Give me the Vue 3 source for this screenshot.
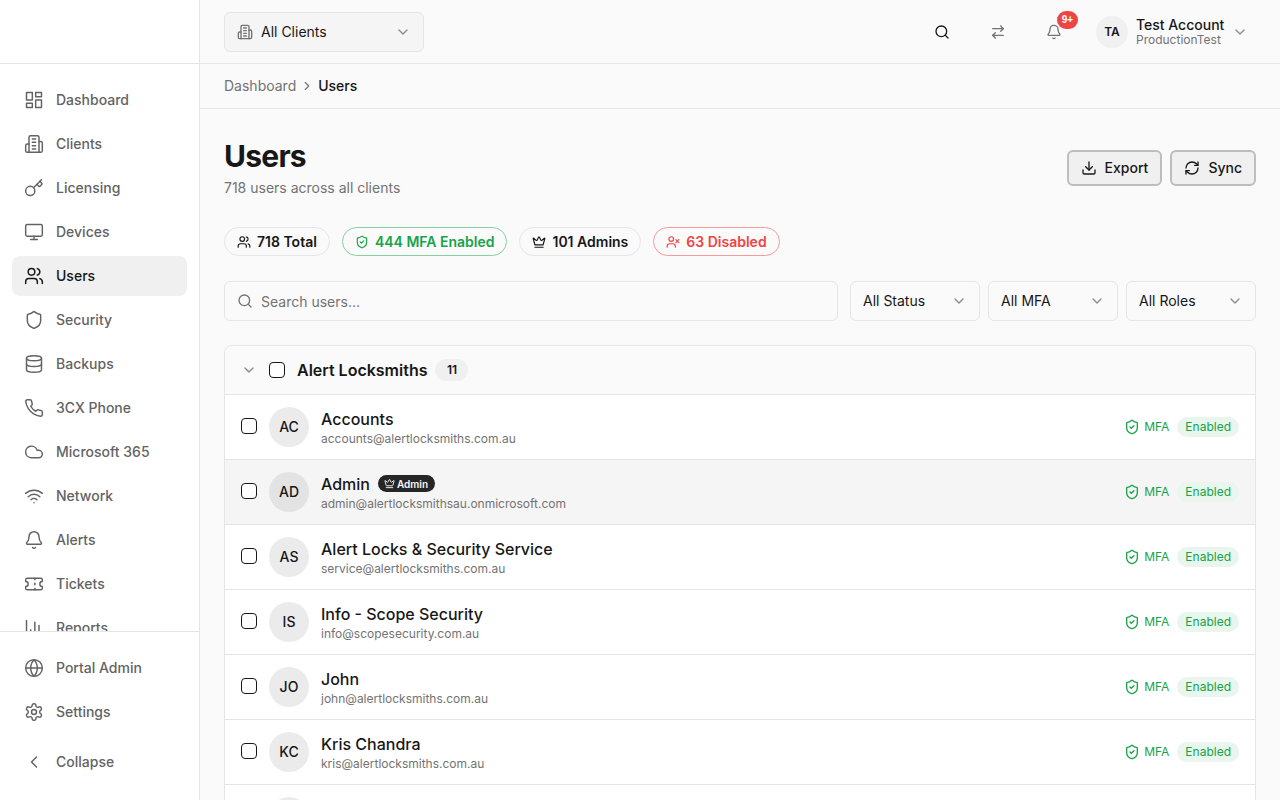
<script setup>
import { ref } from 'vue';

// lucide style icon shapes, kept as lists of path data
const icons = {
  dashboard: ['M3 3h7v9H3z', 'M14 3h7v5h-7z', 'M14 12h7v9h-7z', 'M3 16h7v5H3z'],
  building: ['M6 22V4a2 2 0 0 1 2-2h8a2 2 0 0 1 2 2v18z', 'M6 12H4a2 2 0 0 0-2 2v6a2 2 0 0 0 2 2h2', 'M18 9h2a2 2 0 0 1 2 2v9a2 2 0 0 1-2 2h-2', 'M10 6h4', 'M10 10h4', 'M10 14h4', 'M10 18h4'],
  key: ['M15.5 7.5l2.3 2.3a1 1 0 0 0 1.4 0l2.1-2.1a1 1 0 0 0 0-1.4L19 4', 'M21 2l-9.6 9.6', 'M7.5 21a5.5 5.5 0 1 0 0-11 5.5 5.5 0 0 0 0 11z'],
  monitor: ['M4 3h16a2 2 0 0 1 2 2v10a2 2 0 0 1-2 2H4a2 2 0 0 1-2-2V5a2 2 0 0 1 2-2z', 'M8 21h8', 'M12 17v4'],
  users: ['M16 21v-2a4 4 0 0 0-4-4H6a4 4 0 0 0-4 4v2', 'M9 11a4 4 0 1 0 0-8 4 4 0 0 0 0 8z', 'M22 21v-2a4 4 0 0 0-3-3.87', 'M16 3.13a4 4 0 0 1 0 7.75'],
  shield: ['M20 13c0 5-3.5 7.5-7.66 8.95a1 1 0 0 1-.67-.01C7.5 20.5 4 18 4 13V6a1 1 0 0 1 1-1c2 0 4.5-1.2 6.24-2.72a1.17 1.17 0 0 1 1.52 0C14.51 3.81 17 5 19 5a1 1 0 0 1 1 1z'],
  shieldCheck: ['M20 13c0 5-3.5 7.5-7.66 8.95a1 1 0 0 1-.67-.01C7.5 20.5 4 18 4 13V6a1 1 0 0 1 1-1c2 0 4.5-1.2 6.24-2.72a1.17 1.17 0 0 1 1.52 0C14.51 3.81 17 5 19 5a1 1 0 0 1 1 1z', 'M9 12l2 2 4-4'],
  database: ['M12 8c4.97 0 9-1.34 9-3s-4.03-3-9-3-9 1.34-9 3 4.03 3 9 3z', 'M3 5v14c0 1.66 4 3 9 3s9-1.34 9-3V5', 'M3 12c0 1.66 4 3 9 3s9-1.34 9-3'],
  phone: ['M22 16.92v3a2 2 0 0 1-2.18 2 19.79 19.79 0 0 1-8.63-3.07 19.5 19.5 0 0 1-6-6 19.79 19.79 0 0 1-3.07-8.67A2 2 0 0 1 4.11 2h3a2 2 0 0 1 2 1.72c.13.96.36 1.9.7 2.81a2 2 0 0 1-.45 2.11L8.09 9.91a16 16 0 0 0 6 6l1.27-1.27a2 2 0 0 1 2.11-.45c.91.34 1.85.57 2.81.7A2 2 0 0 1 22 16.92z'],
  cloud: ['M17.5 19H9a7 7 0 1 1 6.71-9h1.79a4.5 4.5 0 1 1 0 9z'],
  wifi: ['M12 20h.01', 'M2 8.82a15 15 0 0 1 20 0', 'M5 12.86a10 10 0 0 1 14 0', 'M8.5 16.43a5 5 0 0 1 7 0'],
  bell: ['M10.27 21a2 2 0 0 0 3.46 0', 'M3.26 15.33A1 1 0 0 0 4 17h16a1 1 0 0 0 .74-1.67C19.41 13.96 18 12.5 18 8A6 6 0 0 0 6 8c0 4.5-1.41 5.96-2.74 7.33'],
  ticket: ['M2 9a3 3 0 0 1 0 6v2a2 2 0 0 0 2 2h16a2 2 0 0 0 2-2v-2a3 3 0 0 1 0-6V7a2 2 0 0 0-2-2H4a2 2 0 0 0-2 2z', 'M13 5v2', 'M13 17v2', 'M13 11v2'],
  chart: ['M3 3v16a2 2 0 0 0 2 2h16', 'M18 17V9', 'M13 17V5', 'M8 17v-3'],
  globe: ['M12 22a10 10 0 1 0 0-20 10 10 0 0 0 0 20z', 'M12 2a14.5 14.5 0 0 0 0 20 14.5 14.5 0 0 0 0-20', 'M2 12h20'],
  gear: ['M12.22 2h-.44a2 2 0 0 0-2 2v.18a2 2 0 0 1-1 1.73l-.43.25a2 2 0 0 1-2 0l-.15-.08a2 2 0 0 0-2.73.73l-.22.38a2 2 0 0 0 .73 2.73l.15.1a2 2 0 0 1 1 1.72v.51a2 2 0 0 1-1 1.74l-.15.09a2 2 0 0 0-.73 2.73l.22.38a2 2 0 0 0 2.73.73l.15-.08a2 2 0 0 1 2 0l.43.25a2 2 0 0 1 1 1.73V20a2 2 0 0 0 2 2h.44a2 2 0 0 0 2-2v-.18a2 2 0 0 1 1-1.73l.43-.25a2 2 0 0 1 2 0l.15.08a2 2 0 0 0 2.73-.73l.22-.39a2 2 0 0 0-.73-2.73l-.15-.08a2 2 0 0 1-1-1.74v-.5a2 2 0 0 1 1-1.74l.15-.09a2 2 0 0 0 .73-2.73l-.22-.38a2 2 0 0 0-2.73-.73l-.15.08a2 2 0 0 1-2 0l-.43-.25a2 2 0 0 1-1-1.73V4a2 2 0 0 0-2-2z', 'M12 15a3 3 0 1 0 0-6 3 3 0 0 0 0 6z'],
  left: ['M15 18l-6-6 6-6'],
  down: ['M6 9l6 6 6-6'],
  right: ['M9 18l6-6-6-6'],
  search: ['M11 19a8 8 0 1 0 0-16 8 8 0 0 0 0 16z', 'M21 21l-4.3-4.3'],
  swap: ['M16 3l4 4-4 4', 'M20 7H4', 'M8 21l-4-4 4-4', 'M4 17h16'],
  download: ['M21 15v4a2 2 0 0 1-2 2H5a2 2 0 0 1-2-2v-4', 'M7 10l5 5 5-5', 'M12 15V3'],
  sync: ['M3 12a9 9 0 0 1 9-9 9.75 9.75 0 0 1 6.74 2.74L21 8', 'M21 3v5h-5', 'M21 12a9 9 0 0 1-9 9 9.75 9.75 0 0 1-6.74-2.74L3 16', 'M8 16H3v5'],
  crown: ['M11.56 3.27a.5.5 0 0 1 .88 0l2.95 5.61a1 1 0 0 0 1.52.3l4.28-3.67a.5.5 0 0 1 .8.52l-2.83 10.25a1 1 0 0 1-.96.72H5.8a1 1 0 0 1-.96-.72L2.01 6.03a.5.5 0 0 1 .8-.52l4.28 3.67a1 1 0 0 0 1.52-.3z', 'M5 21h14'],
  userX: ['M16 21v-2a4 4 0 0 0-4-4H6a4 4 0 0 0-4 4v2', 'M9 11a4 4 0 1 0 0-8 4 4 0 0 0 0 8z', 'M17 8l5 5', 'M22 8l-5 5']
};

const navItems = [
  { label: 'Dashboard', icon: 'dashboard' },
  { label: 'Clients', icon: 'building' },
  { label: 'Licensing', icon: 'key' },
  { label: 'Devices', icon: 'monitor' },
  { label: 'Users', icon: 'users', active: true },
  { label: 'Security', icon: 'shield' },
  { label: 'Backups', icon: 'database' },
  { label: '3CX Phone', icon: 'phone' },
  { label: 'Microsoft 365', icon: 'cloud' },
  { label: 'Network', icon: 'wifi' },
  { label: 'Alerts', icon: 'bell' },
  { label: 'Tickets', icon: 'ticket' },
  { label: 'Reports', icon: 'chart' }
];

const bottomItems = [
  { label: 'Portal Admin', icon: 'globe' },
  { label: 'Settings', icon: 'gear' }
];

const pills = [
  { label: '718 Total', icon: 'users', tone: '' },
  { label: '444 MFA Enabled', icon: 'shieldCheck', tone: 'green' },
  { label: '101 Admins', icon: 'crown', tone: '' },
  { label: '63 Disabled', icon: 'userX', tone: 'red' }
];

const filters = ['All Status', 'All MFA', 'All Roles'];

const users = ref([
  { initials: 'AC', name: 'Accounts', email: 'accounts@alertlocksmiths.com.au' },
  { initials: 'AD', name: 'Admin', email: 'admin@alertlocksmithsau.onmicrosoft.com', admin: true, hover: true },
  { initials: 'AS', name: 'Alert Locks & Security Service', email: 'service@alertlocksmiths.com.au' },
  { initials: 'IS', name: 'Info - Scope Security', email: 'info@scopesecurity.com.au' },
  { initials: 'JO', name: 'John', email: 'john@alertlocksmiths.com.au' },
  { initials: 'KC', name: 'Kris Chandra', email: 'kris@alertlocksmiths.com.au' },
  { initials: 'LS', name: 'Locksmith Service', email: 'locksmith@alertlocksmiths.com.au' }
]);
</script>

<template>
  <div class="app">
    <aside class="sidebar">
      <div class="logo"></div>
      <nav class="nav">
        <a v-for="item in navItems" :key="item.label" class="nav-item" :class="{ active: item.active }">
          <svg class="icon-20" viewBox="0 0 24 24"><path v-for="d in icons[item.icon]" :key="d" :d="d" /></svg>
          <span>{{ item.label }}</span>
        </a>
      </nav>
      <div class="side-bottom">
        <a v-for="item in bottomItems" :key="item.label" class="nav-item">
          <svg class="icon-20" viewBox="0 0 24 24"><path v-for="d in icons[item.icon]" :key="d" :d="d" /></svg>
          <span>{{ item.label }}</span>
        </a>
        <a class="nav-item collapse">
          <svg class="icon-20" viewBox="0 0 24 24"><path v-for="d in icons.left" :key="d" :d="d" /></svg>
          <span>Collapse</span>
        </a>
      </div>
    </aside>

    <div class="main">
      <header class="topbar">
        <button class="client-select">
          <svg class="icon-16 muted" viewBox="0 0 24 24"><path v-for="d in icons.building" :key="d" :d="d" /></svg>
          <span class="client-label">All Clients</span>
          <svg class="icon-16 chev" viewBox="0 0 24 24"><path v-for="d in icons.down" :key="d" :d="d" /></svg>
        </button>
        <div class="top-actions">
          <button class="top-btn dark">
            <svg class="icon-16" viewBox="0 0 24 24"><path v-for="d in icons.search" :key="d" :d="d" /></svg>
          </button>
          <button class="top-btn">
            <svg class="icon-16" viewBox="0 0 24 24"><path v-for="d in icons.swap" :key="d" :d="d" /></svg>
          </button>
          <button class="top-btn">
            <svg class="icon-16" viewBox="0 0 24 24"><path v-for="d in icons.bell" :key="d" :d="d" /></svg>
            <span class="badge">9+</span>
          </button>
          <div class="account">
            <div class="account-avatar">TA</div>
            <div class="account-info">
              <div class="account-name">Test Account</div>
              <div class="account-org">ProductionTest</div>
            </div>
            <svg class="icon-16 chev" viewBox="0 0 24 24"><path v-for="d in icons.down" :key="d" :d="d" /></svg>
          </div>
        </div>
      </header>

      <div class="breadcrumb">
        <span class="crumb">Dashboard</span>
        <svg class="icon-14 muted" viewBox="0 0 24 24"><path v-for="d in icons.right" :key="d" :d="d" /></svg>
        <span class="crumb-current">Users</span>
      </div>

      <main class="content">
        <div class="page-head">
          <div>
            <h1>Users</h1>
            <p>718 users across all clients</p>
          </div>
          <div class="head-actions">
            <button class="action-btn">
              <svg class="icon-16" viewBox="0 0 24 24"><path v-for="d in icons.download" :key="d" :d="d" /></svg>
              Export
            </button>
            <button class="action-btn">
              <svg class="icon-16" viewBox="0 0 24 24"><path v-for="d in icons.sync" :key="d" :d="d" /></svg>
              Sync
            </button>
          </div>
        </div>

        <div class="pills">
          <div v-for="pill in pills" :key="pill.label" class="pill" :class="pill.tone">
            <svg class="icon-14" viewBox="0 0 24 24"><path v-for="d in icons[pill.icon]" :key="d" :d="d" /></svg>
            {{ pill.label }}
          </div>
        </div>

        <div class="filters">
          <div class="search">
            <svg class="icon-16 muted" viewBox="0 0 24 24"><path v-for="d in icons.search" :key="d" :d="d" /></svg>
            <span>Search users...</span>
          </div>
          <div v-for="f in filters" :key="f" class="filter">
            <span>{{ f }}</span>
            <svg class="icon-16 chev" viewBox="0 0 24 24"><path v-for="d in icons.down" :key="d" :d="d" /></svg>
          </div>
        </div>

        <section class="group">
          <div class="group-head">
            <svg class="icon-16 chev" viewBox="0 0 24 24"><path v-for="d in icons.down" :key="d" :d="d" /></svg>
            <span class="check"></span>
            <span class="group-name">Alert Locksmiths</span>
            <span class="group-count">11</span>
          </div>
          <div v-for="user in users" :key="user.email" class="row" :class="{ hover: user.hover }">
            <span class="check"></span>
            <div class="avatar">{{ user.initials }}</div>
            <div class="user-info">
              <div class="user-line">
                <span class="user-name">{{ user.name }}</span>
                <span v-if="user.admin" class="admin-tag">
                  <svg viewBox="0 0 24 24"><path v-for="d in icons.crown" :key="d" :d="d" /></svg>
                  Admin
                </span>
              </div>
              <div class="user-email">{{ user.email }}</div>
            </div>
            <div class="mfa">
              <svg class="icon-16" viewBox="0 0 24 24"><path v-for="d in icons.shieldCheck" :key="d" :d="d" /></svg>
              <span>MFA</span>
              <span class="enabled">Enabled</span>
            </div>
          </div>
        </section>
      </main>
    </div>
  </div>
</template>

<style>
html, body {
  margin: 0;
  height: 100%;
  overflow: hidden;
}
</style>

<style scoped>
.app {
  display: flex;
  width: 1280px;
  height: 800px;
  overflow: hidden;
  background: #fafafa;
  color: #171717;
  font-family: Inter, "Liberation Sans", sans-serif;
  font-size: 14px;
  line-height: 20px;
}

svg {
  fill: none;
  stroke: currentColor;
  stroke-width: 2;
  stroke-linecap: round;
  stroke-linejoin: round;
  flex-shrink: 0;
}

.icon-20 { width: 20px; height: 20px; stroke-width: 1.75; }
.icon-16 { width: 16px; height: 16px; }
.icon-14 { width: 14px; height: 14px; }
.muted { color: #737373; }
.chev { color: #8a8a8a; }

.sidebar {
  width: 200px;
  flex-shrink: 0;
  display: flex;
  flex-direction: column;
  box-sizing: border-box;
  background: #fff;
  border-right: 1px solid #e5e5e5;
}

.logo {
  height: 64px;
  flex-shrink: 0;
  box-sizing: border-box;
  border-bottom: 1px solid #e5e5e5;
}

.nav {
  flex: 1;
  min-height: 0;
  overflow: hidden;
  padding: 16px 12px 0;
}

.nav-item {
  display: flex;
  align-items: center;
  gap: 12px;
  height: 40px;
  margin-bottom: 4px;
  padding: 0 12px;
  border-radius: 8px;
  color: #636363;
  font-size: 14px;
  font-weight: 500;
}

.nav-item.active {
  background: #f0f0f0;
  color: #171717;
}

.side-bottom {
  flex-shrink: 0;
  height: 169px;
  box-sizing: border-box;
  padding: 16px 12px 0;
  border-top: 1px solid #e5e5e5;
}

.collapse {
  margin-top: 10px;
}

.main {
  flex: 1;
  min-width: 0;
  display: flex;
  flex-direction: column;
}

.topbar {
  height: 64px;
  flex-shrink: 0;
  box-sizing: border-box;
  display: flex;
  align-items: center;
  justify-content: space-between;
  padding: 0 24px;
  border-bottom: 1px solid #e5e5e5;
}

.client-select {
  display: flex;
  align-items: center;
  gap: 8px;
  width: 200px;
  height: 40px;
  box-sizing: border-box;
  padding: 0 12px;
  background: #f5f5f5;
  border: 1px solid #e5e5e5;
  border-radius: 6px;
  color: #171717;
  font: inherit;
}

.client-label {
  flex: 1;
  text-align: left;
}

.top-actions {
  display: flex;
  align-items: center;
  gap: 16px;
}

.top-btn {
  position: relative;
  display: flex;
  align-items: center;
  justify-content: center;
  width: 40px;
  height: 40px;
  padding: 0;
  background: none;
  border: none;
  color: #737373;
}

.top-btn.dark {
  color: #171717;
}

.badge {
  position: absolute;
  top: -1px;
  right: -4px;
  width: 21px;
  height: 18px;
  border-radius: 9px;
  background: #ef4444;
  color: #fff;
  font-size: 10px;
  font-weight: 600;
  line-height: 18px;
  text-align: center;
}

.account {
  display: flex;
  align-items: center;
  gap: 8px;
  margin-left: 6px;
  margin-right: 8px;
}

.account-avatar {
  width: 32px;
  height: 32px;
  border-radius: 50%;
  background: #f0f0f0;
  display: flex;
  align-items: center;
  justify-content: center;
  font-size: 12px;
  font-weight: 600;
}

.account-info {
  width: 88px;
  white-space: nowrap;
}

.account-name {
  font-size: 14px;
  font-weight: 500;
  line-height: 16px;
}

.account-org {
  font-size: 12px;
  line-height: 14px;
  color: #737373;
}

.breadcrumb {
  height: 45px;
  flex-shrink: 0;
  box-sizing: border-box;
  display: flex;
  align-items: center;
  gap: 4px;
  padding: 0 24px;
  border-bottom: 1px solid #e5e5e5;
}

.crumb {
  color: #737373;
}

.crumb-current {
  font-weight: 500;
}

.content {
  flex: 1;
  min-height: 0;
  overflow: hidden;
  padding: 24px;
}

.page-head {
  display: flex;
  align-items: flex-start;
  justify-content: space-between;
}

h1 {
  margin: 0;
  font-size: 30px;
  font-weight: 700;
  line-height: 46px;
  letter-spacing: -0.75px;
}

p {
  margin: 0;
  color: #737373;
  font-size: 14px;
  line-height: 18px;
}

.head-actions {
  display: flex;
  gap: 8px;
  margin-top: 17px;
}

.action-btn {
  display: flex;
  align-items: center;
  gap: 8px;
  height: 36px;
  box-sizing: border-box;
  padding: 0 12px;
  background: #f0f0f0;
  border: 2px solid #bdbdbd;
  border-radius: 6px;
  color: #171717;
  font: inherit;
  font-weight: 500;
}

.pills {
  display: flex;
  gap: 12px;
  margin-top: 30px;
}

.pill {
  display: flex;
  align-items: center;
  gap: 6px;
  height: 29px;
  box-sizing: border-box;
  padding: 0 12px;
  border: 1px solid #e5e5e5;
  border-radius: 15px;
  font-weight: 600;
}

.pill.green {
  color: #16a34a;
  border-color: #86d19f;
}

.pill.red {
  color: #ef4444;
  border-color: #f69a9a;
}

.filters {
  display: flex;
  gap: 8px;
  margin-top: 25px;
}

.filters .search {
  margin-right: 4px;
}

.search {
  flex: 1;
  display: flex;
  align-items: center;
  gap: 8px;
  height: 40px;
  box-sizing: border-box;
  padding: 0 12px;
  border: 1px solid #e5e5e5;
  border-radius: 6px;
  color: #737373;
}

.search span {
  padding-top: 2px;
}

.filter {
  display: flex;
  align-items: center;
  justify-content: space-between;
  width: 130px;
  height: 40px;
  box-sizing: border-box;
  padding: 0 12px;
  border: 1px solid #e5e5e5;
  border-radius: 6px;
}

.group {
  margin-top: 24px;
  border: 1px solid #e5e5e5;
  border-radius: 8px;
  overflow: hidden;
  background: #fff;
}

.group-head {
  display: flex;
  align-items: center;
  height: 48px;
  padding: 0 16px;
  background: #fafafa;
}

.group-head .check {
  margin-left: 12px;
}

.group-name {
  margin-left: 12px;
  font-size: 16px;
  font-weight: 600;
}

.group-count {
  margin-left: 8px;
  width: 33px;
  height: 22px;
  border-radius: 11px;
  background: #f0f0f0;
  font-size: 12px;
  font-weight: 600;
  line-height: 22px;
  text-align: center;
}

.check {
  width: 16px;
  height: 16px;
  flex-shrink: 0;
  box-sizing: border-box;
  border-radius: 4px;
  border: 1px solid #171717;
  background: #fff;
}

.row {
  display: flex;
  align-items: center;
  height: 65px;
  box-sizing: border-box;
  padding: 0 16px;
  border-top: 1px solid #e5e5e5;
  background: #fff;
}

.row .check {
  margin-bottom: 2px;
}

.row.hover {
  background: #f5f5f5;
}

.avatar {
  width: 40px;
  height: 40px;
  margin-left: 12px;
  flex-shrink: 0;
  border-radius: 50%;
  background: #ebebeb;
  display: flex;
  align-items: center;
  justify-content: center;
  font-size: 14px;
  font-weight: 500;
}

.row.hover .avatar {
  background: #e3e3e3;
}

.user-info {
  flex: 1;
  margin-left: 12px;
}

.user-line {
  display: flex;
  align-items: center;
  gap: 8px;
  height: 22px;
}

.user-name {
  font-size: 16px;
  font-weight: 500;
}

.admin-tag {
  display: flex;
  align-items: center;
  gap: 2px;
  height: 17px;
  padding: 0 7px 0 6px;
  border-radius: 9px;
  background: #262626;
  color: #fafafa;
  font-size: 10px;
  font-weight: 600;
}

.admin-tag svg {
  width: 11px;
  height: 11px;
}

.user-email {
  margin-top: 1px;
  color: #737373;
  font-size: 12px;
  line-height: 16px;
}

.mfa {
  display: flex;
  align-items: center;
  gap: 4px;
  color: #16a34a;
  font-size: 12px;
}

.enabled {
  margin-left: 4px;
  padding: 0 8px;
  height: 20px;
  border-radius: 10px;
  background: #e8f6ed;
  line-height: 20px;
}
</style>
